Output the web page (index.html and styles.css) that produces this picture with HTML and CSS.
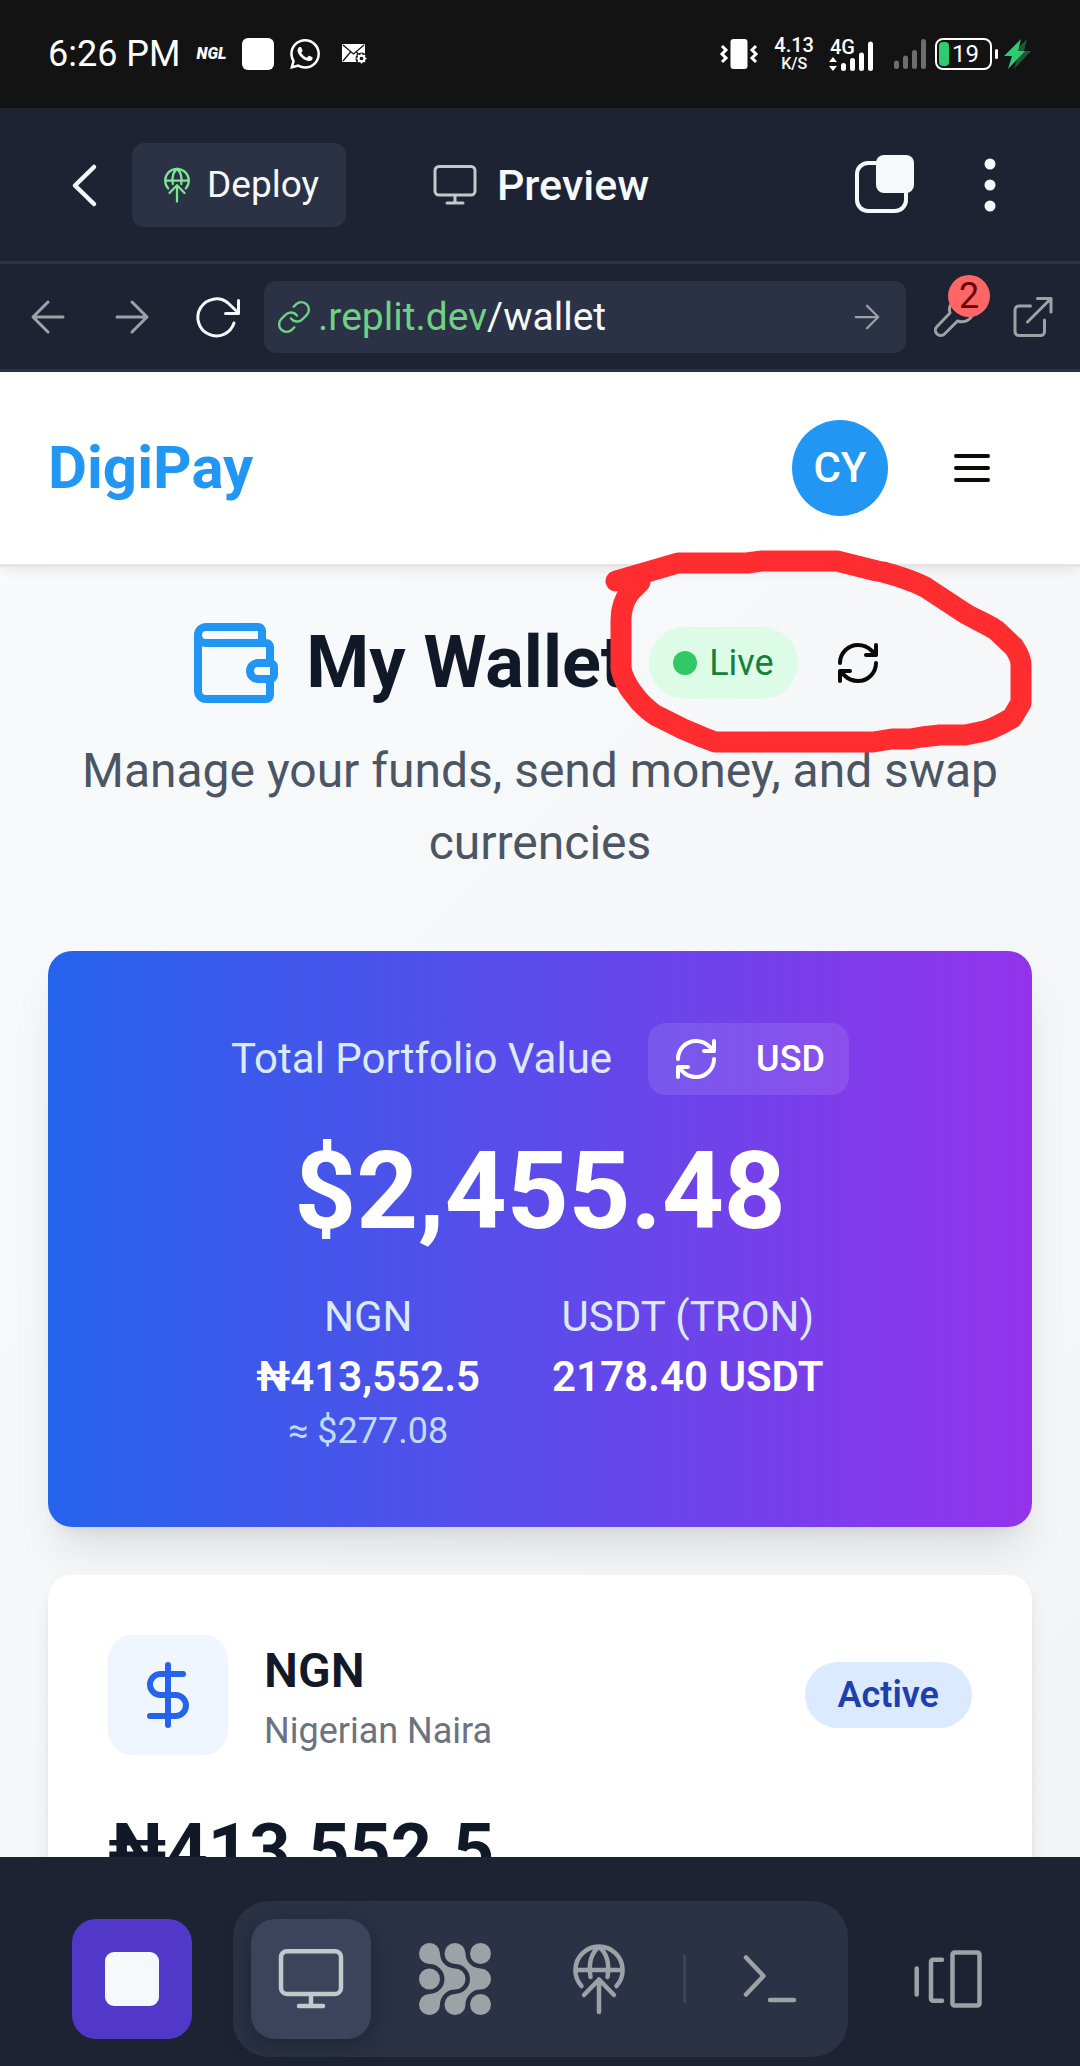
FILE: index.html
```html
<!DOCTYPE html>
<html lang="en">
<head>
<meta charset="utf-8">
<meta name="viewport" content="width=device-width, initial-scale=1">
<title>DigiPay – My Wallet</title>
<link rel="stylesheet" href="styles.css">
</head>
<body>
<svg class="sprite" aria-hidden="true">
  <symbol id="i-deploy" viewBox="0 0 72 72">
    <path d="M18.5 43A23.6 23.6 0 1 1 53.5 43M12.5 27h47M36 4C28 10 25.5 21 27.5 34M36 4C44 10 46.5 21 44.5 34M36 37v32M21 52l15-15.5L51 52"/>
  </symbol>
  <symbol id="i-monitor" viewBox="0 0 72 72">
    <path d="M12 8.200h48a6 6 0 0 1 6 6V45a6 6 0 0 1-6 6H12a6 6 0 0 1-6-6V14.200a6 6 0 0 1 6-6zM36 51v12M24 63h24"/>
  </symbol>
  <symbol id="i-refresh" viewBox="0 0 24 24">
    <path d="M3 12a9 9 0 0 1 9-9 9.750 9.750 0 0 1 6.740 2.740L21 8M21 3v5h-5M21 12a9 9 0 0 1-9 9 9.750 9.750 0 0 1-6.740-2.740L3 16M8 16H3v5"/>
  </symbol>
  <symbol id="i-arrow" viewBox="0 0 48 48">
    <path d="M9 24h29.5M24 9l15 15-15 15"/>
  </symbol>
</svg>

<div class="screen">
  <div class="status">
    <div class="status-side">
      <time class="clock">6:26 PM</time>
      <span class="ngl">NGL</span>
      <span class="app-square"></span>
      <svg class="ic-30" viewBox="0 0 24 24" fill="#fff"><path d="M17.472 14.382c-.297-.149-1.758-.867-2.03-.967-.273-.099-.471-.148-.67.15-.197.297-.767.966-.94 1.164-.173.199-.347.223-.644.075-.297-.15-1.255-.463-2.39-1.475-.883-.788-1.48-1.761-1.653-2.059-.173-.297-.018-.458.13-.606.134-.133.298-.347.446-.52.149-.174.198-.298.298-.497.099-.198.05-.371-.025-.52-.075-.149-.669-1.612-.916-2.207-.242-.579-.487-.5-.669-.51-.173-.008-.371-.01-.57-.01-.198 0-.52.074-.792.372-.272.297-1.04 1.016-1.04 2.479 0 1.462 1.065 2.875 1.213 3.074.149.198 2.096 3.2 5.077 4.487.709.306 1.262.489 1.694.625.712.227 1.36.195 1.871.118.571-.085 1.758-.719 2.006-1.413.248-.694.248-1.289.173-1.413-.074-.124-.272-.198-.57-.347m-5.421 7.403h-.004a9.87 9.87 0 01-5.031-1.378l-.361-.214-3.741.982.998-3.648-.235-.374a9.86 9.86 0 01-1.51-5.26c.001-5.45 4.436-9.884 9.888-9.884 2.64 0 5.122 1.03 6.988 2.898a9.825 9.825 0 012.893 6.994c-.003 5.45-4.437 9.884-9.885 9.884m8.413-18.297A11.815 11.815 0 0012.05 0C5.495 0 .16 5.335.157 11.892c0 2.096.547 4.142 1.588 5.945L.057 24l6.305-1.654a11.882 11.882 0 005.683 1.448h.005c6.554 0 11.89-5.335 11.893-11.893a11.821 11.821 0 00-3.48-8.413Z"/></svg>
      <svg class="mail" viewBox="0 0 26 20"><rect width="23" height="18" rx="1" fill="#fff"/><path d="M1 1l10.500 9L22 1M1 17l7.500-9M22 17l-7.500-9" fill="none" stroke="#131313" stroke-width="1.300"/><circle cx="19.500" cy="14.500" r="6" fill="#131313"/><circle cx="19.500" cy="14.500" r="3" fill="none" stroke="#fff" stroke-width="2"/><path d="M19.500 9.500v10M14.500 14.500h10M16 11l7 7M23 11l-7 7" stroke="#fff" stroke-width="1.500"/><circle cx="19.500" cy="14.500" r="1.800" fill="#131313"/></svg>
    </div>
    <div class="status-side">
      <svg class="vibrate" viewBox="0 0 38 30"><rect x="10.500" width="17" height="30" rx="3" fill="#fff"/><path d="M2 7l4 4-4 4 4 4-4 4M36 7l-4 4 4 4-4 4 4 4" fill="none" stroke="#fff" stroke-width="3"/></svg>
      <span class="speed"><span>4.13</span><span class="unit">K/S</span></span>
      <svg class="signal-4g" viewBox="0 0 44 34"><text class="net" x="0" y="17">4G</text><path d="M3 20l4 5H-1zM3 34l4-5H-1z" fill="#fff"/><path d="M13.500 28.500v3M22.500 23.500v8M31.500 18v13.500M40.500 7v24.500" stroke="#fff" stroke-width="5" stroke-linecap="round"/></svg>
      <div class="sim-power">
        <svg class="signal" viewBox="0 0 32 30"><path d="M2.500 24v3.500M11.500 19v8.500M20.500 13.500v14M29.500 2.500v25" stroke="#6e6e6e" stroke-width="5" stroke-linecap="round"/></svg>
        <span class="power">
          <span class="battery"><span class="charge"></span>19</span>
          <span class="nub"></span>
          <svg class="bolt" viewBox="0 0 28 30"><path d="M23 0L6 17h8l-4 13 17-18h-7z" fill="#1d5a36"/><path d="M17 0L0 17h8L4 30l17-18h-7z" fill="#2ecc71"/></svg>
        </span>
      </div>
    </div>
  </div>

  <header class="topbar">
    <div class="top-left">
      <button class="icon-btn" aria-label="Back"><svg class="ic-48 line bold" viewBox="0 0 48 48"><path d="M34 6L15 24.500 34 43"/></svg></button>
      <button class="deploy"><svg class="ic-36 line"><use href="#i-deploy"/></svg>Deploy</button>
    </div>
    <h2 class="top-title"><svg class="ic-48 line soft"><use href="#i-monitor"/></svg>Preview</h2>
    <div class="top-right">
      <button class="icon-btn" aria-label="Windows"><svg class="ic-60" viewBox="0 0 60 60"><rect x="2" y="8" width="49" height="48" rx="11" fill="none" stroke="#f5f9fc" stroke-width="4"/><rect x="21" width="38" height="38" rx="8" fill="#f5f9fc"/></svg></button>
      <button class="icon-btn" aria-label="More"><svg class="ic-60" viewBox="0 0 60 60" fill="#f5f9fc"><circle cx="30" cy="9" r="5.500"/><circle cx="30" cy="30" r="5.500"/><circle cx="30" cy="51" r="5.500"/></svg></button>
    </div>
  </header>

  <nav class="addressbar" aria-label="Preview navigation">
    <div class="nav-btns">
      <button class="icon-btn" aria-label="Previous page"><svg class="ic-48 line dim flip"><use href="#i-arrow"/></svg></button>
      <button class="icon-btn" aria-label="Next page"><svg class="ic-48 line dim"><use href="#i-arrow"/></svg></button>
      <button class="icon-btn" aria-label="Reload"><svg class="ic-48 line" viewBox="0 0 48 48"><path d="M42 30A18.500 18.500 0 1 1 36 10L46 19.500M46.500 7.500V20.500H33.500"/></svg></button>
    </div>
    <div class="url">
      <svg class="ic-36 line link" viewBox="0 0 24 24"><path d="M10 13a5 5 0 0 0 7.540.540l3-3a5 5 0 0 0-7.070-7.070l-1.720 1.710M14 11a5 5 0 0 0-7.540-.540l-3 3a5 5 0 0 0 7.070 7.070l1.710-1.710"/></svg>
      <label class="host" for="path">.replit.dev</label>
      <input id="path" class="path" type="text" value="/wallet">
      <button class="icon-btn" aria-label="Go"><svg class="ic-36 line dim"><use href="#i-arrow"/></svg></button>
    </div>
    <div class="tools">
      <button class="icon-btn has-badge" aria-label="Developer tools"><svg class="ic-48 line dim" viewBox="0 0 48 48"><path d="M20 20L7 33.500a5 5 0 0 0 7.500 7.500L27.500 28c6 2 11 0 14.500-5 2-4 2-8 0-11l-6 6-5-5 6-6c-11-3-20 4-17 13z"/></svg><span class="badge">2</span></button>
      <button class="icon-btn" aria-label="Open in new tab"><svg class="ic-48 line dim" viewBox="0 0 48 48"><path d="M22.500 13H11a4 4 0 0 0-4 4v21.500a4 4 0 0 0 4 4h21.500a4 4 0 0 0 4-4V27M19.500 29L43 5.500M29.500 5.500h13.500V19"/></svg></button>
    </div>
  </nav>

  <div class="viewport">
    <header class="site-header">
      <a class="brand" href="#">DigiPay</a>
      <div class="site-actions">
        <span class="avatar">CY</span>
        <button class="menu" aria-label="Menu"><svg class="ic-48 lucide" viewBox="0 0 24 24"><path d="M4 12h16M4 6h16M4 18h16"/></svg></button>
      </div>
    </header>

    <main class="page">
      <section class="intro">
        <div class="title-row">
          <h1 class="title"><svg class="ic-96 lucide" viewBox="0 0 24 24"><path d="M19 7V4a1 1 0 0 0-1-1H5a2 2 0 0 0 0 4h15a1 1 0 0 1 1 1v4h-3a2 2 0 0 0 0 4h3a1 1 0 0 0 1-1v-2a1 1 0 0 0-1-1"/><path d="M3 5v14a2 2 0 0 0 2 2h15a1 1 0 0 0 1-1v-4"/></svg>My Wallet</h1>
          <span class="live"><span class="dot"></span>Live</span>
          <button class="refresh" aria-label="Refresh"><svg class="ic-48 lucide"><use href="#i-refresh"/></svg></button>
          <svg class="scribble" viewBox="600 540 440 220" aria-hidden="true"><path d="M616 581L678 563H747L762 561H837L877 571 883 572C898 576 911 580 925 587L963 612C974 619 985 623 996 630L1014 647C1018 653 1021 659 1021 665V703L1012 718 1001 724C995 727 988 731 980 732L965 735H940L922 737 910 739H892L873 742H715L702 737 683 729 655 715C649 711 645 707 640 702L632 692C628 687 622 676 621 668V620C621 609 623 601 630 592L640 582"/></svg>
        </div>
        <p class="lead">Manage your funds, send money, and swap currencies</p>
      </section>

      <section class="portfolio">
        <div class="portfolio-head">
          <span class="label">Total Portfolio Value</span>
          <button class="currency"><svg class="ic-48 lucide"><use href="#i-refresh"/></svg>USD</button>
        </div>
        <p class="total">$2,455.48</p>
        <div class="holdings">
          <div class="holding"><span class="label">NGN</span><span class="amount">₦413,552.5</span><span class="approx">≈ $277.08</span></div>
          <div class="holding"><span class="label">USDT (TRON)</span><span class="amount">2178.40 USDT</span></div>
        </div>
      </section>

      <section class="account">
        <div class="account-head">
          <span class="account-icon"><svg class="ic-72 lucide" viewBox="0 0 24 24"><path d="M12 2v20M17 5H9.500a3.500 3.500 0 0 0 0 7h5a3.500 3.500 0 0 1 0 7H6"/></svg></span>
          <div class="account-name"><h3>NGN</h3><p>Nigerian Naira</p></div>
          <span class="state">Active</span>
        </div>
        <p class="balance">₦413,552.5</p>
      </section>
    </main>
  </div>

  <footer class="dock">
    <button class="dock-btn stop" aria-label="Stop"><span class="stop-mark"></span></button>
    <div class="dock-group">
      <button class="dock-btn active" aria-label="Preview"><svg class="ic-72 line soft"><use href="#i-monitor"/></svg></button>
      <button class="dock-btn" aria-label="Agent"><svg class="ic-72" viewBox="0 0 72 72" fill="#9da2a6"><path id="wave" d="M10.500 21A10.500 10.500 0 1 1 21 10.500A15 15 0 0 0 36 25.500A10.500 10.500 0 0 1 36 46.500A15 15 0 0 0 21 61.500A10.500 10.500 0 1 1 10.500 51A15 15 0 0 0 10.500 21Z"/><use href="#wave" x="25.500"/><circle cx="61.500" cy="10.500" r="10.500"/><circle cx="10.500" cy="36" r="10.500"/><circle cx="61.500" cy="61.500" r="10.500"/></svg></button>
      <button class="dock-btn" aria-label="Deployments"><svg class="ic-72 line dim"><use href="#i-deploy"/></svg></button>
      <span class="divider"></span>
      <button class="dock-btn" aria-label="Shell"><svg class="ic-72 line bold dim" viewBox="0 0 72 72"><path d="M12 14.500L29.500 33 12 51.500M36 57h24"/></svg></button>
    </div>
    <button class="dock-btn" aria-label="Tabs"><svg class="ic-72 line bold dim" viewBox="0 0 72 72"><path d="M4.700 25.500v26M30 16.700H21a2 2 0 0 0-2 2v37a2 2 0 0 0 2 2h9M42.500 9.500h23a2 2 0 0 1 2 2v49a2 2 0 0 1-2 2h-23a2 2 0 0 1-2-2v-49a2 2 0 0 1 2-2z"/></svg></button>
  </footer>
</div>
</body>
</html>
```

FILE: styles.css
```css
*, *::before, *::after { box-sizing: border-box; }

body {
  margin: 0;
  font-family: Roboto, "Noto Sans", sans-serif;
  background: #1d2333;
}

h1, h2, h3, p { margin: 0; }
button { margin: 0; padding: 0; border: 0; background: none; font: inherit; color: inherit; cursor: pointer; }
svg { display: block; flex: none; overflow: visible; }
.sprite { position: absolute; width: 0; height: 0; }

.ic-30 { width: 30px; height: 30px; }
.ic-36 { width: 36px; height: 36px; }
.ic-48 { width: 48px; height: 48px; }
.ic-60 { width: 60px; height: 60px; }
.ic-72 { width: 72px; height: 72px; }
.ic-96 { width: 96px; height: 96px; }

/* Stroke widths are in each icon's own viewBox units */
.line { fill: none; stroke: currentColor; stroke-width: 4.5; stroke-linecap: round; stroke-linejoin: round; }
.addressbar .line { stroke-width: 3; }
.addressbar .link { stroke-width: 1.6; }
.lucide { fill: none; stroke: currentColor; stroke-width: 2; stroke-linecap: round; stroke-linejoin: round; }
.soft { color: #c2c8cc; }
.dim { color: #9da2a6; }
.flip { transform: rotate(180deg); }

.screen { display: flex; flex-direction: column; height: 100vh; }

/* Phone status bar */
.status {
  display: flex;
  justify-content: space-between;
  align-items: center;
  height: 108px;
  padding: 0 48px;
  background: #131313;
  color: #fff;
  flex: none;
}
.status-side { display: flex; align-items: center; gap: 16px; }
.clock { font-size: 36px; line-height: 48px; }
.ngl { font-size: 16px; line-height: 24px; font-weight: 900; font-style: italic; }
.app-square { width: 32px; height: 32px; border-radius: 6px; background: #fff; }
.mail { width: 26px; height: 20px; margin-left: 6px; }
.vibrate { width: 38px; height: 30px; }
.speed { display: flex; flex-direction: column; align-items: center; font-size: 20px; line-height: 20px; font-weight: 500; }
.unit { font-size: 16px; line-height: 18px; }
.signal-4g { width: 44px; height: 34px; }
.net { font-size: 20px; font-weight: 500; fill: #fff; }
.sim-power { display: flex; align-items: center; gap: 9px; padding-left: 4px; }
.signal { width: 32px; height: 30px; }
.power { display: flex; align-items: center; gap: 3px; }
.battery {
  display: flex;
  align-items: center;
  gap: 3px;
  width: 57px;
  height: 32px;
  padding: 2px;
  border: 2px solid #fff;
  border-radius: 8px;
  font-size: 24px;
  line-height: 24px;
}
.charge { width: 10px; height: 24px; border-radius: 4px; background: #2ecc71; }
.nub { width: 3px; height: 10px; border-radius: 2px; background: #fff; }
.bolt { width: 28px; height: 30px; margin-left: 3px; }

/* Editor top bar */
.topbar {
  display: grid;
  grid-template-columns: 1fr auto 1fr;
  align-items: center;
  height: 156px;
  padding: 0 60px;
  border-bottom: 3px solid #2b3245;
  color: #f5f9fc;
  flex: none;
}
.top-left { display: flex; align-items: center; gap: 24px; }
.deploy {
  display: flex;
  align-items: center;
  gap: 12px;
  height: 84px;
  padding: 0 27px;
  border-radius: 12px;
  background: #2b3245;
  font-size: 37px;
}
.deploy svg { color: #7fe594; }
.top-title { display: flex; align-items: center; gap: 18px; font-size: 43px; line-height: 48px; font-weight: 500; }
.top-right { display: flex; align-items: center; justify-content: flex-end; gap: 45px; }

/* Address bar */
.addressbar {
  display: flex;
  align-items: center;
  gap: 24px;
  height: 108px;
  padding: 0 24px;
  border-bottom: 3px solid #2b3245;
  color: #f5f9fc;
  flex: none;
}
.nav-btns { display: flex; gap: 36px; }
.tools { display: flex; gap: 30px; }
.url {
  display: flex;
  align-items: center;
  flex: 1;
  min-width: 0;
  height: 72px;
  padding: 0 21px 0 12px;
  border-radius: 12px;
  background: #2b3245;
  font-size: 39px;
}
.link, .host { color: #6fd183; }
.host { margin-left: 6px; }
.path { flex: 1; min-width: 0; padding: 0; border: 0; outline: 0; background: none; font: inherit; color: #f5f9fc; }
.has-badge { position: relative; }
.badge {
  position: absolute;
  top: -18px;
  right: -12px;
  width: 42px;
  height: 42px;
  border-radius: 50%;
  background: #ff6666;
  color: #6b0000;
  font-size: 36px;
  line-height: 42px;
  text-align: center;
}

/* Site */
.viewport { flex: 1; min-height: 0; overflow: hidden; background: linear-gradient(135deg, #f9fafb, #f3f4f6); }
.site-header {
  display: flex;
  align-items: center;
  justify-content: space-between;
  height: 195px;
  padding: 0 48px;
  background: #fff;
  border-bottom: 3px solid #e5e5e5;
  box-shadow: 0 6px 12px -3px rgba(0, 0, 0, .08);
}
.brand { font-size: 60px; line-height: 84px; font-weight: 700; color: #2196f3; text-decoration: none; }
.site-actions { display: flex; align-items: center; gap: 24px; }
.avatar {
  width: 96px;
  height: 96px;
  border-radius: 50%;
  background: #2196f3;
  color: #fff;
  font-size: 42px;
  line-height: 96px;
  font-weight: 500;
  text-align: center;
}
.menu { padding: 36px; color: #0c0a09; }

.page { display: flex; flex-direction: column; gap: 48px; padding: 48px; }
.intro { display: flex; flex-direction: column; gap: 24px; padding-bottom: 24px; text-align: center; }
.title-row { position: relative; display: flex; align-items: center; justify-content: center; gap: 24px; }
.title { display: flex; align-items: center; gap: 24px; font-size: 72px; line-height: 80px; font-weight: 700; color: #111827; white-space: nowrap; }
.title svg { color: #2196f3; }
.live {
  display: flex;
  align-items: center;
  gap: 12px;
  height: 72px;
  padding: 0 24px;
  border-radius: 36px;
  background: #dcfce7;
  color: #15803d;
  font-size: 36px;
}
.dot { width: 24px; height: 24px; border-radius: 50%; background: #2fc864; }
.refresh { padding: 12px; color: #0c0a09; }
.scribble { position: absolute; z-index: 1; top: -75px; left: calc(50% + 60px); width: 440px; height: 220px; pointer-events: none; }
.scribble path { fill: none; stroke: #ff2d30; stroke-width: 21; stroke-linecap: round; stroke-linejoin: round; }
.lead { font-size: 48px; line-height: 72px; color: #4b5563; }

.portfolio {
  padding: 72px;
  border-radius: 24px;
  background: linear-gradient(90deg, #2563eb, #9333ea);
  box-shadow: 0 30px 45px -9px rgba(0, 0, 0, .1), 0 12px 18px -12px rgba(0, 0, 0, .1);
  color: #fff;
  text-align: center;
}
.portfolio-head { display: flex; align-items: center; justify-content: center; gap: 36px; }
.label { font-size: 42px; line-height: 60px; color: #dbeafe; }
.currency {
  display: flex;
  align-items: center;
  gap: 36px;
  height: 72px;
  padding: 0 24px;
  border-radius: 18px;
  background: rgba(255, 255, 255, .1);
  font-size: 36px;
  font-weight: 500;
}
.total { margin: 36px 0; font-size: 108px; line-height: 120px; font-weight: 700; }
.holdings { display: flex; justify-content: center; gap: 72px; }
.holding { display: flex; flex-direction: column; }
.amount { font-size: 42px; line-height: 60px; font-weight: 600; }
.approx { font-size: 36px; line-height: 48px; color: #bfdbfe; }

.account {
  padding: 60px;
  border-radius: 24px;
  background: #fff;
  box-shadow: 0 12px 18px -3px rgba(0, 0, 0, .1), 0 6px 12px -6px rgba(0, 0, 0, .1);
  color: #111827;
}
.account-head { display: flex; align-items: center; gap: 36px; }
.account-icon { display: grid; place-items: center; width: 120px; height: 120px; border-radius: 24px; background: #eff6ff; color: #2563eb; }
.account-name { flex: 1; }
.account-name h3 { font-size: 48px; line-height: 72px; font-weight: 600; }
.account-name p { font-size: 36px; line-height: 48px; color: #6b7280; }
.state { padding: 9px 33px; border-radius: 33px; background: #dbeafe; color: #1e40af; font-size: 36px; line-height: 48px; font-weight: 600; }
.balance { margin-top: 48px; font-size: 72px; line-height: 96px; font-weight: 700; }

/* Bottom dock */
.dock {
  display: flex;
  align-items: center;
  justify-content: space-between;
  padding: 44px 72px 9px;
  background: #1d2333;
  flex: none;
}
.dock-group { display: flex; align-items: center; gap: 24px; padding: 18px; border-radius: 36px; background: #2b3245; }
.dock-btn { display: grid; place-items: center; width: 120px; height: 120px; border-radius: 24px; }
.stop { background: #5138c9; }
.stop-mark { width: 54px; height: 54px; border-radius: 9px; background: #f5f9fc; }
.active { background: #3c445c; box-shadow: 0 6px 24px rgba(20, 24, 38, .5); }
.divider { width: 3px; height: 48px; background: #3c445c; }
```
